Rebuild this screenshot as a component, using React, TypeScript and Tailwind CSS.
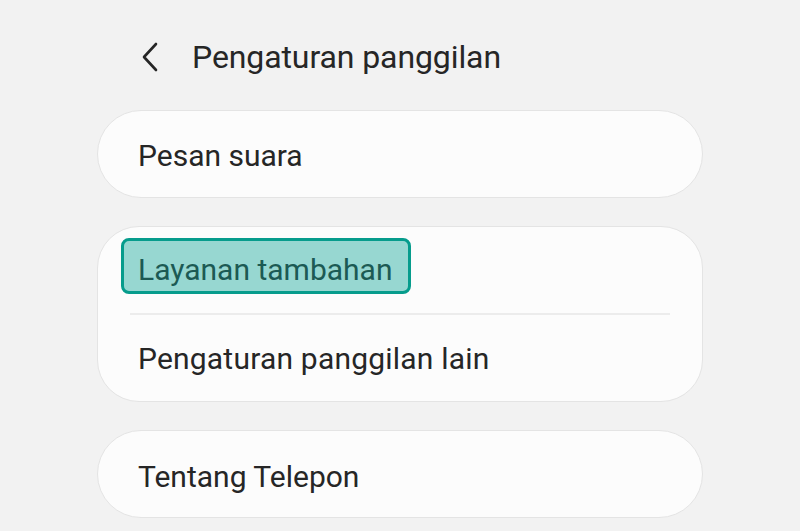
import React from "react";

export default function App() {
  return (
    <div className="w-[800px] h-[531px] overflow-hidden bg-[#f2f2f2] font-['Roboto',sans-serif] text-[#262626]">
      <div className="flex items-center h-[110px] pl-[141px] pt-[4px]">
        <svg width="18" height="30" viewBox="0 0 18 30" className="shrink-0">
          <path d="M15 2 L3 15 L15 28" fill="none" stroke="#262626" strokeWidth="2.6" strokeLinecap="round" strokeLinejoin="round" />
        </svg>
        <span className="ml-[33px] text-[32px] tracking-[-0.1px] leading-none">Pengaturan panggilan</span>
      </div>
      <div className="flex flex-col gap-[28px] mx-[97px]">
        <div className="h-[88px] rounded-[44px] bg-[#fcfcfc] border border-[#e4e4e4] flex items-center pl-[40px] pt-[4px]">
          <span className="text-[30px] leading-none">Pesan suara</span>
        </div>
        <div className="h-[176px] rounded-[42px] bg-[#fcfcfc] border border-[#e4e4e4] flex flex-col pt-[11px]">
          <div className="ml-[23px] w-[290px] h-[56px] rounded-[8px] border-[3.5px] border-[#069c8c] bg-[#97d7d1] flex items-center pl-[14px] pt-[8px]">
            <span className="text-[30px] leading-none text-[#1c5a54]">Layanan tambahan</span>
          </div>
          <div className="mt-[19px] mx-[32px] h-[2px] bg-[#ececec]" />
          <div className="flex-1 flex items-center pl-[40px] pt-[2px]">
            <span className="text-[30px] leading-none tracking-[0.2px]">Pengaturan panggilan lain</span>
          </div>
        </div>
        <div className="h-[88px] rounded-[44px] bg-[#fcfcfc] border border-[#e4e4e4] flex items-center pl-[40px] pt-[5px]">
          <span className="text-[30px] leading-none">Tentang Telepon</span>
        </div>
      </div>
    </div>
  );
}
